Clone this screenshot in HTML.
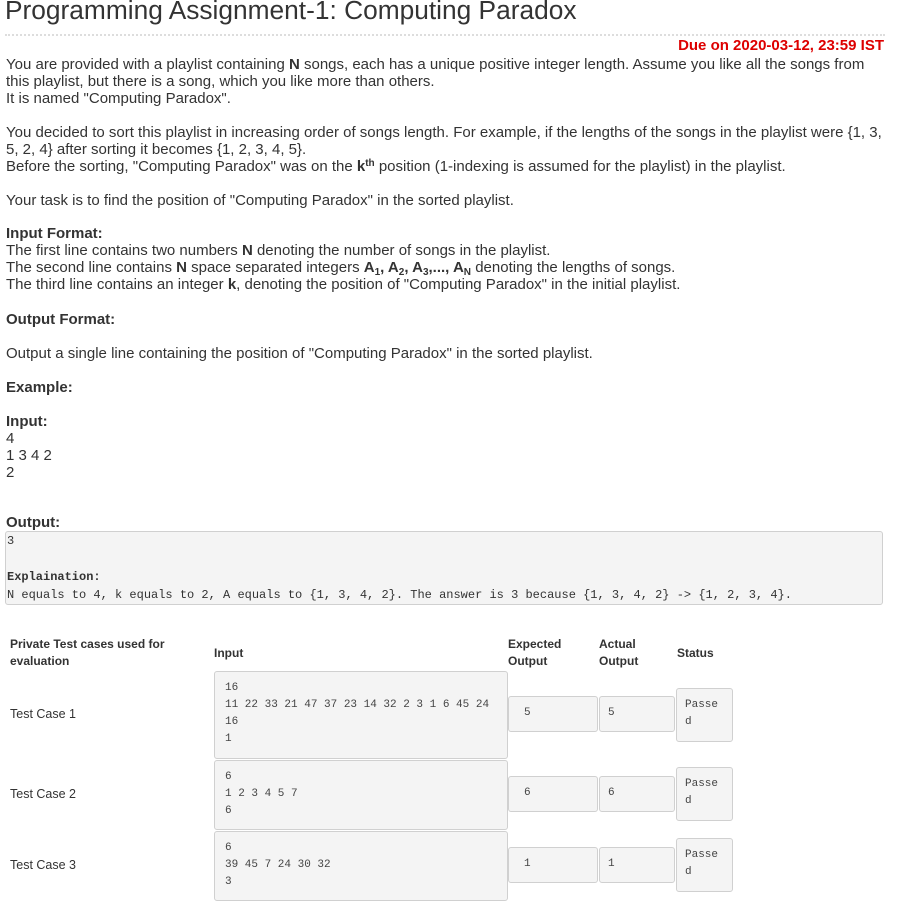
<!DOCTYPE html>
<html><head><meta charset="utf-8"><style>
*{margin:0;padding:0;box-sizing:border-box}
body{width:917px;height:903px;background:#fff;position:relative;overflow:hidden;font-family:"Liberation Sans",Arial,sans-serif;color:#333;font-size:15px}
.a{position:absolute;white-space:nowrap;line-height:17px}
.m{font-family:"Liberation Mono",monospace}
.box{position:absolute;background:#f4f4f4;border:1px solid #d0d0d0;border-radius:3px}
.t{font-size:11px;line-height:17px;color:#444;font-family:"Liberation Mono",monospace;position:absolute;white-space:pre}
.h{font-size:12px;font-weight:bold;line-height:17px;position:absolute}
.c{font-size:12.5px;position:absolute;line-height:17px}
sub{font-size:10px;vertical-align:-3px;line-height:0}
sup{font-size:10px;vertical-align:5px;line-height:0}
</style></head><body>
<div class="a" style="left:5px;top:-6px;font-size:26.3px;line-height:32px;color:#333">Programming Assignment-1: Computing Paradox</div>
<div style="position:absolute;left:5px;top:34px;width:880px;border-top:2px dotted #ddd"></div>
<div class="a" style="right:33px;top:37px;color:#d00;font-weight:bold">Due on 2020-03-12, 23:59 IST</div>
<div class="a" style="left:6px;top:56px">You are provided with a playlist containing <b>N</b> songs, each has a unique positive integer length. Assume you like all the songs from<br>this playlist, but there is a song, which you like more than others.<br>It is named "Computing Paradox".</div>
<div class="a" style="left:6px;top:124px">You decided to sort this playlist in increasing order of songs length. For example, if the lengths of the songs in the playlist were {1, 3,<br>5, 2, 4} after sorting it becomes {1, 2, 3, 4, 5}.<br>Before the sorting, "Computing Paradox" was on the <b>k<sup>th</sup></b> position (1-indexing is assumed for the playlist) in the playlist.</div>
<div class="a" style="left:6px;top:192px">Your task is to find the position of "Computing Paradox" in the sorted playlist.</div>
<div class="a" style="left:6px;top:225px"><b>Input Format:</b><br>The first line contains two numbers <b>N</b> denoting the number of songs in the playlist.<br>The second line contains <b>N</b> space separated integers <b>A<sub>1</sub>, A<sub>2</sub>, A<sub>3</sub>,..., A<sub>N</sub></b> denoting the lengths of songs.<br>The third line contains an integer <b>k</b>, denoting the position of "Computing Paradox" in the initial playlist.</div>
<div class="a" style="left:6px;top:311px"><b>Output Format:</b></div>
<div class="a" style="left:6px;top:345px">Output a single line containing the position of "Computing Paradox" in the sorted playlist.</div>
<div class="a" style="left:6px;top:379px"><b>Example:</b></div>
<div class="a" style="left:6px;top:413px"><b>Input:</b><br>4<br>1 3 4 2<br>2</div>
<div class="a" style="left:6px;top:514px"><b>Output:</b></div>
<div class="box" style="left:5px;top:531px;width:878px;height:74px"></div>
<div class="a m" style="left:7px;top:532px;font-size:12px;line-height:18px;color:#333">3<br><br><b>Explaination:</b><br>N equals to 4, k equals to 2, A equals to {1, 3, 4, 2}. The answer is 3 because {1, 3, 4, 2} -&gt; {1, 2, 3, 4}.</div>

<div class="h" style="left:10px;top:636px">Private Test cases used for<br>evaluation</div>
<div class="h" style="left:214px;top:645px">Input</div>
<div class="h" style="left:508px;top:636px">Expected<br>Output</div>
<div class="h" style="left:599px;top:636px">Actual<br>Output</div>
<div class="h" style="left:677px;top:645px">Status</div>

<div class="c" style="left:10px;top:706px">Test Case 1</div>
<div class="box" style="left:214px;top:671px;width:294px;height:88px"></div>
<div class="t" style="left:225px;top:680px">16
11 22 33 21 47 37 23 14 32 2 3 1 6 45 24
16
1</div>
<div class="box" style="left:508px;top:696px;width:90px;height:36px"></div><div class="t" style="left:524px;top:705px">5</div>
<div class="box" style="left:599px;top:696px;width:76px;height:36px"></div><div class="t" style="left:608px;top:705px">5</div>
<div class="box" style="left:676px;top:688px;width:57px;height:54px"></div><div class="t" style="left:685px;top:697px">Passe
d</div>

<div class="c" style="left:10px;top:786px">Test Case 2</div>
<div class="box" style="left:214px;top:760px;width:294px;height:70px"></div>
<div class="t" style="left:225px;top:769px">6
1 2 3 4 5 7
6</div>
<div class="box" style="left:508px;top:776px;width:90px;height:36px"></div><div class="t" style="left:524px;top:785px">6</div>
<div class="box" style="left:599px;top:776px;width:76px;height:36px"></div><div class="t" style="left:608px;top:785px">6</div>
<div class="box" style="left:676px;top:767px;width:57px;height:54px"></div><div class="t" style="left:685px;top:776px">Passe
d</div>

<div class="c" style="left:10px;top:857px">Test Case 3</div>
<div class="box" style="left:214px;top:831px;width:294px;height:70px"></div>
<div class="t" style="left:225px;top:840px">6
39 45 7 24 30 32
3</div>
<div class="box" style="left:508px;top:847px;width:90px;height:36px"></div><div class="t" style="left:524px;top:856px">1</div>
<div class="box" style="left:599px;top:847px;width:76px;height:36px"></div><div class="t" style="left:608px;top:856px">1</div>
<div class="box" style="left:676px;top:838px;width:57px;height:54px"></div><div class="t" style="left:685px;top:847px">Passe
d</div>
</body></html>
